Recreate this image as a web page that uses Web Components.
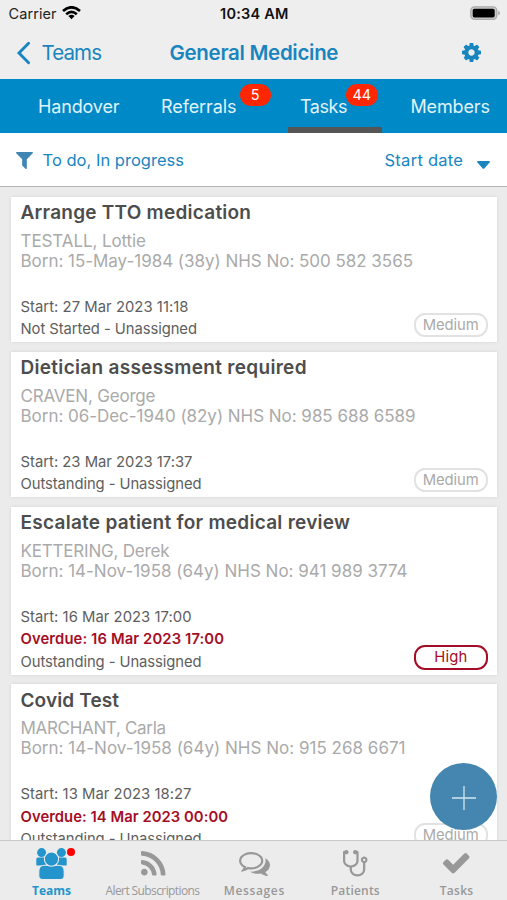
<!DOCTYPE html>
<html lang="en">
<head>
<meta charset="utf-8">
<title>General Medicine</title>
<style>
html, body { margin: 0; height: 100%; overflow: hidden; }
body { font-family: Inter, "Liberation Sans", sans-serif; background: #ebebeb; }
</style>
</head>
<body>
<team-app></team-app>
<script>
const define = (name, html, setup) => customElements.define(name, class extends HTMLElement {
  connectedCallback() {
    if (this.shadowRoot) return;
    const root = this.attachShadow({ mode: 'open' });
    root.innerHTML = typeof html === 'function' ? html(this) : html;
    if (setup) setup(this, root);
  }
});

/* One line of text, tracked to fill the width given in "w". */
define('fit-text', el => `<style>:host{display:block;white-space:nowrap;flex:none;width:${el.getAttribute('w')}px}span{display:inline-block}</style><span>${el.getAttribute('text')}</span>`,
  (el, root) => {
    const s = root.querySelector('span');
    const n = el.getAttribute('text').length;
    s.style.letterSpacing = (+el.getAttribute('w') - s.getBoundingClientRect().width) / Math.max(1, n - 1) + 'px';
  });

const ICONS = {
  cog: ['128 128 1536 1536', 'M1152 896q0-106-75-181t-181-75-181 75-75 181 75 181 181 75 181-75 75-181zm512-109v222q0 12-8 23t-20 13l-185 28q-19 54-39 91 35 50 107 138 10 12 10 25t-9 23q-27 37-99 108t-94 71q-12 0-26-9l-138-108q-44 23-91 38-16 136-29 186-7 28-36 28h-222q-14 0-24.5-8.5t-11.5-21.5l-28-184q-49-16-90-37l-141 107q-10 9-25 9-14 0-25-11-126-114-165-168-7-10-7-23 0-12 8-23 15-21 51-66.5t54-70.5q-27-50-41-99l-183-27q-13-2-21-12.5t-8-23.5v-222q0-12 8-23t19-13l186-28q14-46 39-92-40-57-107-138-10-12-10-24 0-10 9-23 26-36 98.5-107.5t94.5-71.5q13 0 26 10l138 107q44-23 91-38 16-136 29-186 7-28 36-28h222q14 0 24.5 8.5t11.5 21.5l28 184q49 16 90 37l142-107q9-9 24-9 13 0 25 10 129 119 165 170 7 8 7 22 0 12-8 23-15 21-51 66.5t-54 70.5q26 50 41 98l183 28q13 2 21 12.5t8 23.5z'],
  filter: ['191 256 1410 1408', 'M1595 295q17 41-14 70l-493 493v742q0 42-39 59-13 5-25 5-27 0-45-19l-256-256q-19-19-19-45v-486l-493-493q-31-29-14-70 17-39 59-39h1280q42 0 59 39z'],
  check: ['121 330 1550 1192', 'M1671 566q0 40-28 68l-724 724-136 136q-28 28-68 28t-68-28l-136-136-362-362q-28-28-28-68t28-68l136-136q28-28 68-28t68 28l294 295 656-657q28-28 68-28t68 28l136 136q28 28 28 68z'],
  rss: ['192 128 1408 1408', 'M576 1344q0 80-56 136t-136 56-136-56-56-136 56-136 136-56 136 56 56 136zm512 123q2 28-17 48-18 21-47 21h-135q-25 0-43-16.5t-20-41.5q-22-229-184.5-391.5t-391.5-184.5q-25-2-41.5-20t-16.5-43v-135q0-29 21-47 17-17 43-17h5q160 13 306 80.5t259 181.5q114 113 181.5 259t80.5 306zm512 2q2 27-18 47-18 20-46 20h-143q-26 0-44.5-17.5t-19.5-42.5q-12-215-101-408.5t-231.5-336-336-231.5-408.5-102q-25-1-42.5-19.5t-17.5-43.5v-143q0-28 20-46 18-18 44-18h3q262 13 501.5 120t425.5 294q187 186 294 425.5t120 501.5z'],
  comments: ['0 256 1792 1408', 'M704 384q-153 0-286 52t-211.5 141-78.5 191q0 82 53 158t149 132l97 56-35 84q34-20 62-39l44-31 53 10q78 14 153 14 153 0 286-52t211.5-141 78.5-191-78.5-191-211.5-141-286-52zm0-128q191 0 353.5 68.5t256.5 186.5 94 257-94 257-256.5 186.5-353.5 68.5q-86 0-176-16-124 88-278 128-36 9-86 16h-3q-11 0-20.5-8t-11.5-21q-1-3-1-6.5t.5-6.5 2-6l2.5-5 3.5-5.5 4-5 4.5-5 4-4.5q5-6 23-25t26-29.5 22.5-29 25-38.5 20.5-44q-124-72-195-177t-71-224q0-139 94-257t256.5-186.5 353.5-68.5zm822 1169q10 24 20.5 44t25 38.5 22.5 29 26 29.5 23 25q1 1 4 4.5t4.5 5 4 5 3.5 5.5l2.5 5 2 6 .5 6.5-1 6.5q-3 14-13 22t-22 7q-50-7-86-16-154-40-278-128-90 16-176 16-271 0-472-132 58 4 88 4 161 0 309-45t264-129q125-92 192-212t67-254q0-77-23-152 129 71 204 178t75 230q0 120-71 224.5t-195 176.5z'],
  stethoscope: ['64 128 1408 1472', 'M1344 640q0-26-19-45t-45-19-45 19-19 45 19 45 45 19 45-19 19-45zm128 0q0 62-35.5 111t-92.5 70v395q0 159-131.5 271.5t-316.5 112.5-316.5-112.5-131.5-271.5v-132q-164-20-274-128t-110-252v-512q0-26 19-45t45-19q6 0 16 2 17-30 47-48t65-18q53 0 90.5 37.5t37.5 90.5-37.5 90.5-90.5 37.5q-33 0-64-18v402q0 106 94 181t226 75 226-75 94-181v-402q-31 18-64 18-53 0-90.5-37.5t-37.5-90.5 37.5-90.5 90.5-37.5q35 0 65 18t47 48q10-2 16-2 26 0 45 19t19 45v512q0 144-110 252t-274 128v132q0 106 94 181t226 75 226-75 94-181v-395q-57-21-92.5-70t-35.5-111q0-80 56-136t136-56 136 56 56 136z'],
  chevron: ['0 0 13 22', 'M11.6 1.3L2 11L11.6 20.7', 'fill="none" stroke="currentColor" stroke-width="2.9" stroke-linecap="round"'],
  caret: ['0 0 13 8', 'M.6 0H12.4Q13.4.5 12.6 1.5L7.3 7.4Q6.5 8.2 5.7 7.4L.4 1.5Q-.4.5.6 0z'],
  plus: ['0 0 24 24', 'M12 0V24M0 12H24', 'fill="none" stroke="currentColor" stroke-width="1.3"']
};
define('ui-icon', el => {
  const w = el.getAttribute('w'), h = el.getAttribute('h'), name = el.getAttribute('name');
  const css = `<style>:host{display:block;flex:none;width:${w}px;height:${h}px}svg{display:block;width:100%;height:100%;overflow:visible}</style>`;
  if (name === 'team') return css + `<svg viewBox="0 0 31 31" fill="currentColor">
    <circle cx="5.6" cy="4.6" r="4.5"/><circle cx="25.4" cy="4.6" r="4.5"/>
    <path d="M.3 17V11.2Q.3 9.6 1.9 9.6H10V17.6H1Q.3 17.6.3 17zM30.7 17V11.2Q30.7 9.6 29.1 9.6H21V17.6H30Q30.7 17.6 30.7 17z"/>
    <path stroke="#ececec" stroke-width="1.1" d="M2.8 28V23Q2.8 17.2 8.6 17.2H22.4Q28.2 17.2 28.2 23V28Q28.2 31.600 24.600 31.600H6.400Q2.800 31.600 2.800 28z"/>
    <circle cx="15.5" cy="11.1" r="7.1" stroke="#ececec" stroke-width="1.1"/></svg>`;
  const [vb, d, attrs] = ICONS[name];
  return css + `<svg viewBox="${vb}" preserveAspectRatio="none" ${attrs || 'fill="currentColor"'}><path d="${d}"/></svg>`;
});

define('status-bar', `<style>
:host{display:flex;justify-content:space-between;align-items:center;height:27px;padding:0 7px 0 8.500px;box-sizing:border-box;color:#222;font-size:14.500px;line-height:27px}
.l{display:flex;align-items:center;gap:5px;width:211.500px}.b{font-weight:600;flex:1;color:#111}
svg{display:block;position:relative;top:-.5px}
</style><div class="l"><fit-text w="48" text="Carrier"></fit-text>
<svg width="19" height="14" viewBox="0 0 19 14" fill="none" stroke="#000" stroke-width="2.7"><path d="M1 5Q9.5-2.4 18 5M4.2 8.2Q9.5 3.7 14.8 8.2"/><path d="M9.5 13.2L6.4 10.1Q9.5 7.6 12.6 10.1z" fill="#000" stroke="none"/></svg></div>
<div class="b"><fit-text w="68.5" text="10:34 AM"></fit-text></div>
<svg width="30" height="14" viewBox="0 0 30 14"><rect x=".8" y=".8" width="26" height="12.6" rx="3.8" fill="#ccc" stroke="#aaa" stroke-width="1.3"/><rect x="2.7" y="2.7" width="22" height="8.8" rx="1.8" fill="#000"/><path d="M28.2 4.8Q30 5.6 30 7.1T28.2 9.4z" fill="#aaa"/></svg>`);

define('nav-bar', `<style>
:host{display:flex;align-items:center;height:52px;color:#1985bf;padding:0 26.500px 1px 17px;box-sizing:border-box;font-size:20.500px;line-height:50px}
.t{font-weight:600;margin-left:67.500px;flex:1}.k{margin-left:11.500px}
</style><ui-icon name="chevron" w="13" h="22"></ui-icon><fit-text class="k" w="60.5" text="Teams"></fit-text>
<fit-text class="t" w="169" text="General Medicine"></fit-text><ui-icon name="cog" w="19" h="19"></ui-icon>`);

define('tab-item', el => `<style>
:host{display:block;flex:none;position:relative;box-sizing:border-box;height:54px;padding-left:12px;line-height:55px}
:host([active])::after{content:"";position:absolute;left:0;right:0;bottom:.5px;height:6px;background:#555}
i{position:absolute;font-style:normal;top:5px;width:31.5px;height:22px;border-radius:11px;background:#ff2600;font-size:14.5px;line-height:22.5px;text-align:center;color:#fff}
</style><fit-text w="${el.getAttribute('w')}" text="${el.getAttribute('label')}"></fit-text>${el.hasAttribute('count') ? `<i style="left:${el.getAttribute('at')}px">${el.getAttribute('count')}</i>` : ''}`);
define('tab-strip', `<style>
:host{display:flex;height:54px;background:#0089c7;color:#e2f3fb;font-size:18px;padding-left:26px;box-sizing:border-box;overflow:hidden}
</style><tab-item style="width:123px" w="81.5" label="Handover"></tab-item>
<tab-item style="width:139px" w="75.5" label="Referrals" count="5" at="90.5"></tab-item>
<tab-item style="width:94px" w="47.5" label="Tasks" count="44" at="58" active></tab-item>
<tab-item style="width:108px;margin-left:16.5px" w="79.5" label="Members"></tab-item>`);

define('filter-bar', `<style>
:host{display:flex;align-items:center;height:53px;background:#fff;border-bottom:1px solid #b5b5b5;padding:0 17px 0 15.5px;color:#1985bf;font-size:16.5px;line-height:54px;box-sizing:content-box}
.a{margin-left:10px;flex:1}.d{margin:10px 0 0 14px}
</style><ui-icon name="filter" w="17" h="17" style="color:#3f86b2;margin-top:2px"></ui-icon><fit-text class="a" w="141.5" text="To do, In progress"></fit-text>
<fit-text w="78.5" text="Start date"></fit-text><ui-icon class="d" name="caret" w="13" h="8"></ui-icon>`);

define('task-card', el => {
  const t = JSON.parse(el.getAttribute('task'));
  const line = (cls, [text, w]) => `<fit-text class="${cls}" w="${w - 1}" text="${text}"></fit-text>`;
  return `<style>
:host{display:block;position:relative;box-sizing:border-box;background:#fff;padding:4.5px 10px 2px 9.5px;box-shadow:0 0 3px rgba(0,0,0,.1)}
.t{font-size:19px;font-weight:600;line-height:24px;color:#4d4d4d;margin-bottom:5.5px}
.p{font-size:17px;line-height:20px;color:#aaa}
.g{height:25px}
.m{font-size:14.8px;line-height:22.4px;color:#5e5e5e}
.o{color:#a50d26;font-weight:600}
.c{position:absolute;right:9.5px;bottom:5px;width:73.5px;height:24.5px;box-sizing:border-box;border:2px solid #e2e2e2;border-radius:11px;color:#aaa;font-size:14.8px;line-height:21px;display:flex;justify-content:center}
.h{border-color:#a50d26;border-width:2.5px;color:#a50d26;line-height:21px}
</style>${line('t', t.title)}${line('p', t.name)}${line('p', t.born)}<div class="g"></div>${line('m', t.start)}${t.due ? line('m o', t.due) : ''}${line('m', t.state)}
<div class="c ${t.high ? 'h' : ''}">${t.high ? line('', ['High', 34]) : line('', ['Medium', 57])}</div>`;
});

const TASKS = [
  { title: ['Arrange TTO medication', 231.5], name: ['TESTALL, Lottie', 126.5], born: ['Born: 15-May-1984 (38y) NHS No: 500 582 3565', 393.5], start: ['Start: 27 Mar 2023 11:18', 169], state: ['Not Started - Unassigned', 177.5] },
  { title: ['Dietician assessment required', 287], name: ['CRAVEN, George', 136], born: ['Born: 06-Dec-1940 (82y) NHS No: 985 688 6589', 396], start: ['Start: 23 Mar 2023 17:37', 173], state: ['Outstanding - Unassigned', 182] },
  { title: ['Escalate patient for medical review', 330.5], name: ['KETTERING, Derek', 150], born: ['Born: 14-Nov-1958 (64y) NHS No: 941 989 3774', 388], start: ['Start: 16 Mar 2023 17:00', 172], due: ['Overdue: 16 Mar 2023 17:00', 204.5], state: ['Outstanding - Unassigned', 182], high: 1 },
  { title: ['Covid Test', 99.5], name: ['MARCHANT, Carla', 146.5], born: ['Born: 14-Nov-1958 (64y) NHS No: 915 268 6671', 386], start: ['Start: 13 Mar 2023 18:27', 172], due: ['Overdue: 14 Mar 2023 00:00', 208.5], state: ['Outstanding - Unassigned', 182] }
];
define('task-list', `<style>
:host{display:flex;flex-direction:column;gap:9.3px;padding:9.5px 10px 0 11px;box-sizing:border-box;flex:1;min-height:0;overflow:hidden;position:relative}
task-card{flex:none}
.f{position:absolute;right:10px;bottom:10px;width:67px;height:67px;border-radius:50%;background:#4486b0;color:#d5e5ef;display:flex;align-items:center;justify-content:center}
</style>${TASKS.map(t => `<task-card task='${JSON.stringify(t)}'></task-card>`).join('')}
<div class="f"><ui-icon name="plus" w="24" h="24" style="position:relative;top:1px"></ui-icon></div>`);

define('dock-item', el => `<style>
:host{display:flex;flex-direction:column;align-items:center;flex:1 1 0;position:relative;color:#989898;font-weight:600}
:host([active]){color:#2494cd;font-weight:700}
.i{height:39px;margin-top:3px;display:flex;align-items:center}
b{position:absolute;left:65.7px;top:6.7px;width:8.8px;height:8.8px;border-radius:50%;background:#f00}
</style><div class="i"><ui-icon name="${el.getAttribute('icon')}" w="${el.getAttribute('iw')}" h="${el.getAttribute('ih')}"></ui-icon></div>
<fit-text w="${el.getAttribute('w')}" text="${el.getAttribute('label')}"></fit-text>${el.hasAttribute('active') ? '<b></b>' : ''}`);
define('dock-bar', `<style>
:host{display:flex;height:60px;flex:none;box-sizing:border-box;border-top:1px solid #c9c9c9;background:#ececec;padding-left:1px;font:600 12px/16px "Open Sans","Noto Sans",sans-serif}
</style><dock-item active icon="team" iw="31" ih="31" w="39" label="Teams"></dock-item>
<dock-item icon="rss" iw="24.5" ih="24.5" w="94.5" label="Alert Subscriptions" style="font-weight:400"></dock-item>
<dock-item icon="comments" iw="31" ih="24" w="60.5" label="Messages"></dock-item>
<dock-item icon="stethoscope" iw="24.5" ih="25.5" w="49" label="Patients"></dock-item>
<dock-item icon="check" iw="26.5" ih="20.5" w="33.5" label="Tasks"></dock-item>`);

define('team-app', `<style>
:host{display:flex;flex-direction:column;width:507px;height:900px;background:#ebebeb;overflow:hidden}
.top{background:#eee}
</style><div class="top"><status-bar></status-bar><nav-bar></nav-bar></div><tab-strip></tab-strip><filter-bar></filter-bar><task-list></task-list><dock-bar></dock-bar>`);
</script>
</body>
</html>
